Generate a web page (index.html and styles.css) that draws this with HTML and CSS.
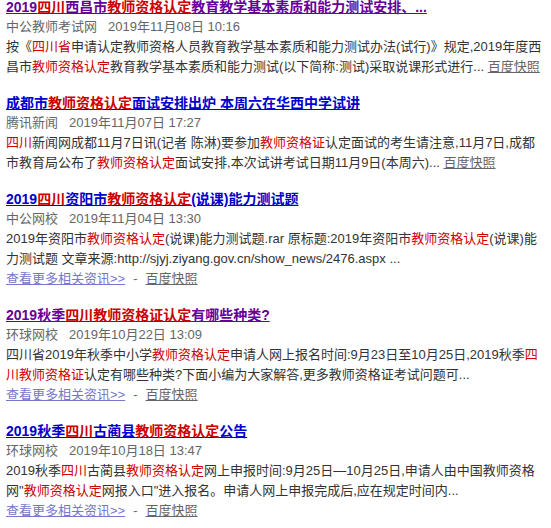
FILE: index.html
```html
<!DOCTYPE html>
<html lang="zh-CN">
<head>
<meta charset="utf-8">
<title>搜索结果</title>
<link rel="stylesheet" href="styles.css">
</head>
<body>
<div class="results">
  <div class="result">
    <a class="title visited" href="#">2019<em>四川</em>西昌市<em>教师资格认定</em>教育教学基本素质和能力测试安排、...</a>
    <div class="meta"><span class="src">中公教师考试网</span>2019年11月08日 10:16</div>
    <div class="abs">按《<em>四川省</em>申请认定教师资格人员教育教学基本素质和能力测试办法(试行)》规定,2019年度西<br>昌市<em>教师资格认定</em>教育教学基本素质和能力测试(以下简称:测试)采取说课形式进行... <a class="cache" href="#">百度快照</a></div>
  </div>
  <div class="result">
    <a class="title" href="#">成都市<em>教师资格认定</em>面试安排出炉 本周六在华西中学试讲</a>
    <div class="meta"><span class="src">腾讯新闻</span>2019年11月07日 17:27</div>
    <div class="abs"><em>四川</em>新闻网成都11月7日讯(记者 陈淋)要参加<em>教师资格证</em>认定面试的考生请注意,11月7日,成都<br>市教育局公布了<em>教师资格认定</em>面试安排,本次试讲考试日期11月9日(本周六)... <a class="cache" href="#">百度快照</a></div>
  </div>
  <div class="result">
    <a class="title" href="#">2019<em>四川</em>资阳市<em>教师资格认定</em>(说课)能力测试题</a>
    <div class="meta"><span class="src">中公网校</span>2019年11月04日 13:30</div>
    <div class="abs">2019年资阳市<em>教师资格认定</em>(说课)能力测试题.rar 原标题:2019年资阳市<em>教师资格认定</em>(说课)能<br>力测试题 文章来源:http://sjyj.ziyang.gov.cn/show_news/2476.aspx ...</div>
    <div class="links"><a class="more" href="#">查看更多相关资讯&gt;&gt;</a><span class="sep">-</span><a class="cache" href="#">百度快照</a></div>
  </div>
  <div class="result">
    <a class="title visited" href="#">2019秋季<em>四川教师资格证认定</em>有哪些种类?</a>
    <div class="meta"><span class="src">环球网校</span>2019年10月22日 13:09</div>
    <div class="abs">四川省2019年秋季中小学<em>教师资格认定</em>申请人网上报名时间:9月23日至10月25日,2019秋季<em>四</em><br><em>川教师资格证</em>认定有哪些种类?下面小编为大家解答,更多教师资格证考试问题可...</div>
    <div class="links"><a class="more" href="#">查看更多相关资讯&gt;&gt;</a><span class="sep">-</span><a class="cache" href="#">百度快照</a></div>
  </div>
  <div class="result">
    <a class="title" href="#">2019秋季<em>四川</em>古蔺县<em>教师资格认定</em>公告</a>
    <div class="meta"><span class="src">环球网校</span>2019年10月18日 13:47</div>
    <div class="abs">2019秋季<em>四川</em>古蔺县<em>教师资格认定</em>网上申报时间:9月25日—10月25日,申请人由中国教师资格<br>网"<em>教师资格认定</em>网报入口"进入报名。申请人网上申报完成后,应在规定时间内...</div>
    <div class="links"><a class="more" href="#">查看更多相关资讯&gt;&gt;</a><span class="sep">-</span><a class="cache" href="#">百度快照</a></div>
  </div>
</div>
</body>
</html>
```

FILE: styles.css
```css
html, body {
  margin: 0;
  padding: 0;
  background: #fff;
}

body {
  font-family: "Liberation Sans", Arial, "Noto Sans CJK SC", sans-serif;
  font-size: 13px;
  color: #333;
  overflow: hidden;
}

.results {
  margin-top: -3px;
  padding-left: 6px;
  width: 545px;
}

.result {
  margin-bottom: 16px;
}

em {
  font-style: normal;
  color: #c00;
}

.title {
  display: block;
  font-size: 14px;
  font-weight: bold;
  line-height: 20px;
  color: #00c;
  text-decoration: underline;
  white-space: nowrap;
}

.title.visited {
  color: #609;
}

.title em {
  color: #c00;
}

.meta {
  line-height: 20px;
  color: #666;
  white-space: nowrap;
}

.src {
  margin-right: 11px;
}

.abs {
  line-height: 20px;
  color: #333;
  white-space: nowrap;
}

.abs em {
  color: #c00;
}

.cache {
  color: #666;
  text-decoration: underline;
}

.links {
  line-height: 20px;
  white-space: nowrap;
  color: #666;
}

.more {
  color: #77c;
  text-decoration: underline;
}

.sep {
  margin: 0 8px 0 8px;
  color: #666;
}
```
